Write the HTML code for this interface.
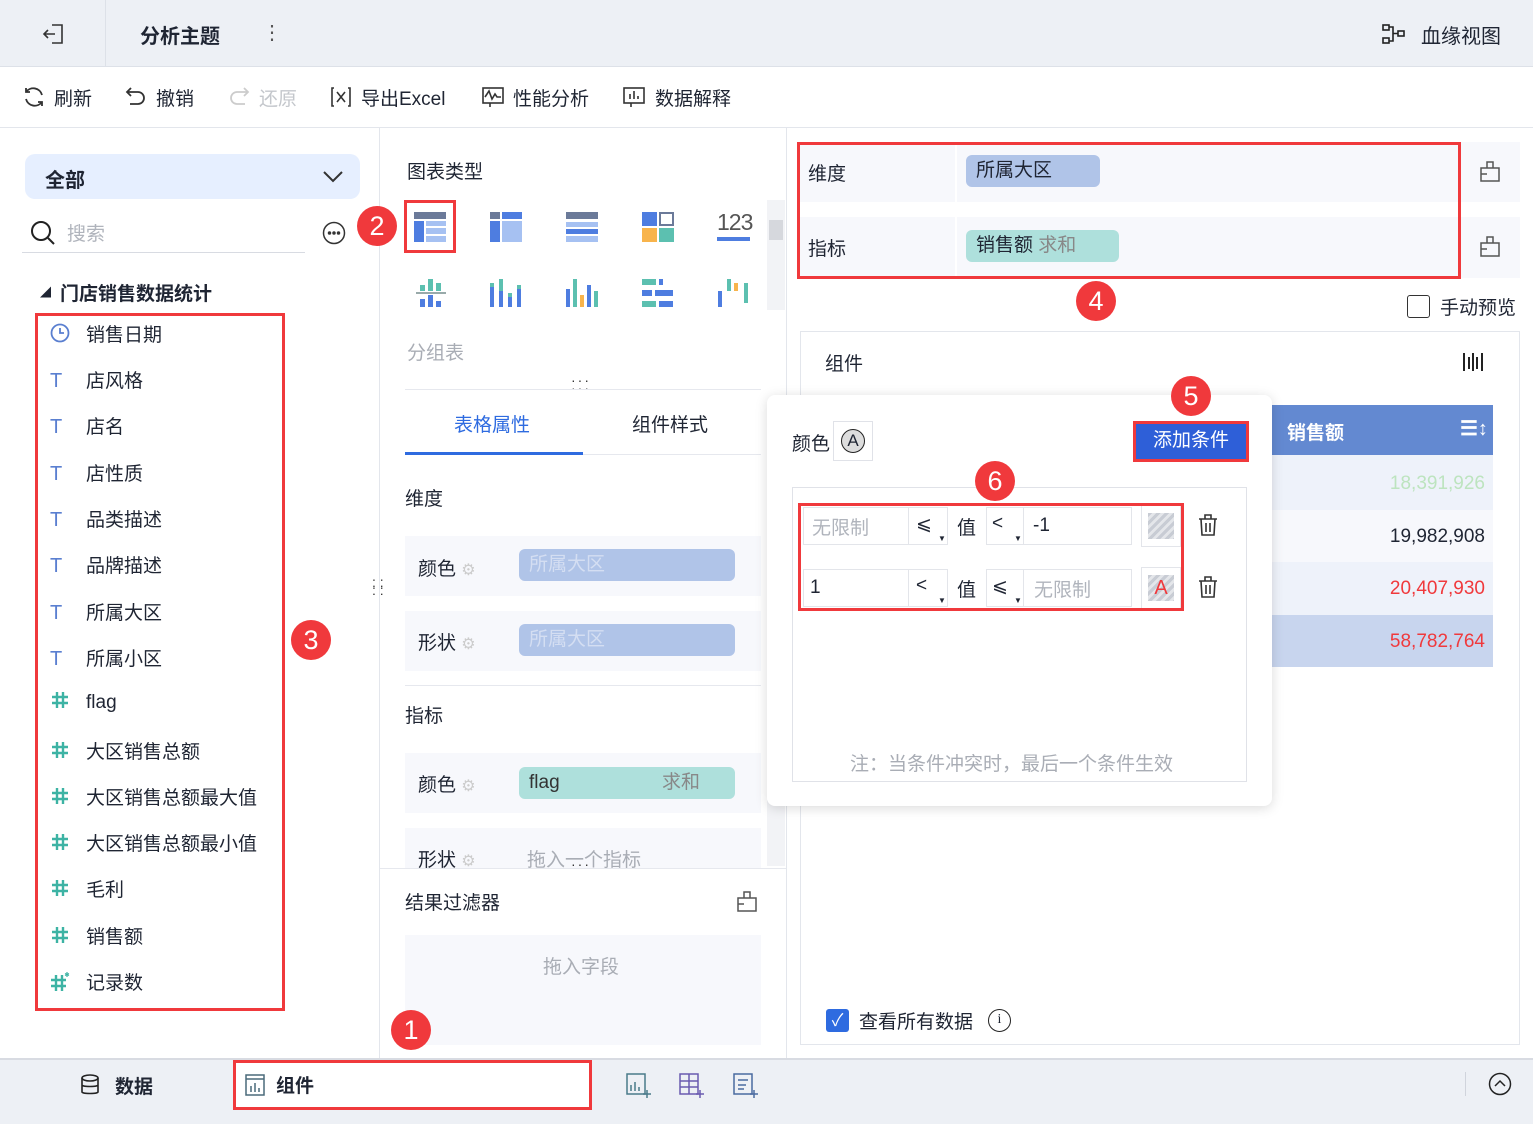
<!DOCTYPE html>
<html><head><meta charset="utf-8">
<style>
*{margin:0;padding:0;box-sizing:border-box}
body{width:1533px;height:1124px;position:relative;overflow:hidden;background:#fff;font-family:"Liberation Sans","Noto Sans CJK SC",sans-serif;color:#1f2533;font-size:19px}
.a{position:absolute;white-space:nowrap}
.badge{position:absolute;width:40px;height:40px;border-radius:50%;background:#f0393c;color:#fff;font-size:27px;text-align:center;line-height:40px}
.red{position:absolute;border:3px solid #f0393c}
.chip{position:absolute;border-radius:6px;padding-left:10px;font-size:19px;line-height:32px}
.row{position:absolute;background:#f7f8fc}
.li{position:absolute;left:50px;font-size:19px}
.li i{display:inline-block;width:36px;font-style:normal;color:#5a7fd0;font-size:20px}
.li svg{vertical-align:-2px;margin-right:16px}
</style></head><body>
<!-- header -->
<div class="a" style="left:0;top:0;width:1533px;height:67px;background:#edf0f5;border-bottom:1px solid #dde1e8"></div>
<div class="a" style="left:105px;top:0;width:1px;height:67px;background:#dde1e8"></div>
<svg class="a" style="left:42px;top:22px" width="24" height="24" viewBox="0 0 24 24" fill="none" stroke="#333" stroke-width="1.6"><path d="M10 3h10v18H10M2 12h11M6 8l-4 4 4 4"/></svg>
<div class="a" style="left:140px;top:20px;font-size:20px;font-weight:bold">分析主题</div>
<div class="a" style="left:262px;top:20px;font-size:20px;color:#555">⋮</div>
<svg class="a" style="left:1382px;top:24px" width="24" height="20" viewBox="0 0 24 20" fill="none" stroke="#222" stroke-width="1.6"><rect x="1" y="1" width="6" height="5"/><rect x="1" y="14" width="6" height="5"/><rect x="16" y="7" width="6" height="5"/><path d="M7 3h4v14H7M11 9.5h5"/></svg>
<div class="a" style="left:1421px;top:20px;font-size:20px">血缘视图</div>
<!-- toolbar -->
<div class="a" style="left:0;top:127px;width:1533px;height:1px;background:#e3e6ec"></div>
<svg class="a" style="left:22px;top:86px" width="24" height="22" viewBox="0 0 24 22" fill="none" stroke="#333" stroke-width="1.8"><path d="M20 9A9 9 0 0 0 4 6M4 2v4h4M4 13a9 9 0 0 0 16 3M20 20v-4h-4"/></svg>
<div class="a" style="left:54px;top:84px">刷新</div>
<svg class="a" style="left:125px;top:86px" width="22" height="22" viewBox="0 0 22 22" fill="none" stroke="#333" stroke-width="1.8"><path d="M6 2L2 6l4 4M2 6h11a6 6 0 0 1 0 12H5"/></svg>
<div class="a" style="left:156px;top:84px">撤销</div>
<svg class="a" style="left:228px;top:86px" width="22" height="22" viewBox="0 0 22 22" fill="none" stroke="#ccc" stroke-width="1.8"><path d="M16 2l4 4-4 4M20 6H9a6 6 0 0 0 0 12h8"/></svg>
<div class="a" style="left:259px;top:84px;color:#c4c7cc">还原</div>
<svg class="a" style="left:330px;top:86px" width="22" height="22" viewBox="0 0 22 22" fill="none" stroke="#333" stroke-width="1.6"><path d="M4 2H2v18h2M18 2h2v18h-2M7 6l8 10M15 6l-8 10"/></svg>
<div class="a" style="left:361px;top:84px">导出Excel</div>
<svg class="a" style="left:482px;top:86px" width="22" height="22" viewBox="0 0 22 22" fill="none" stroke="#333" stroke-width="1.6"><rect x="1" y="2" width="20" height="15"/><path d="M3 11l4-6 3 8 3-5 2 3h4M8 17v4"/></svg>
<div class="a" style="left:513px;top:84px">性能分析</div>
<svg class="a" style="left:623px;top:86px" width="22" height="22" viewBox="0 0 22 22" fill="none" stroke="#333" stroke-width="1.6"><rect x="1" y="2" width="20" height="15"/><path d="M7 13V8M11 13V5M15 13v-3M8 17v4"/></svg>
<div class="a" style="left:655px;top:84px">数据解释</div>
<!-- left panel -->
<div class="a" style="left:379px;top:128px;width:1px;height:930px;background:#e3e6ec"></div>
<div class="a" style="left:25px;top:154px;width:335px;height:45px;background:#e6efff;border-radius:10px"></div>
<div class="a" style="left:45px;top:164px;font-weight:bold;font-size:20px">全部</div>
<svg class="a" style="left:322px;top:170px" width="22" height="14" viewBox="0 0 22 14" fill="none" stroke="#333" stroke-width="2"><path d="M2 2l9 9 9-9"/></svg>
<svg class="a" style="left:30px;top:220px" width="26" height="26" viewBox="0 0 26 26" fill="none" stroke="#222" stroke-width="2"><circle cx="11" cy="11" r="9"/><path d="M18 18l6 6"/></svg>
<div class="a" style="left:67px;top:219px;color:#b0b4bc">搜索</div>
<div class="a" style="left:22px;top:252px;width:283px;height:1px;background:#d8dbe2"></div>
<svg class="a" style="left:322px;top:221px" width="24" height="24" viewBox="0 0 24 24" fill="none" stroke="#333" stroke-width="1.5"><circle cx="12" cy="12" r="10.5"/><circle cx="7.5" cy="12" r="1" fill="#333"/><circle cx="12" cy="12" r="1" fill="#333"/><circle cx="16.5" cy="12" r="1" fill="#333"/></svg>
<div class="a" style="left:40px;top:284px;font-size:11px">◢</div>
<div class="a" style="left:60px;top:279px;font-weight:bold;font-size:19px">门店销售数据统计</div>
<div class="li" style="top:320px"><svg width="20" height="20" viewBox="0 0 20 20" fill="none" stroke="#5a7fd0" stroke-width="1.8"><circle cx="10" cy="10" r="8.5"/><path d="M10 5v5h4"/></svg>销售日期</div>
<div class="li" style="top:366px"><i>T</i>店风格</div>
<div class="li" style="top:412px"><i>T</i>店名</div>
<div class="li" style="top:459px"><i>T</i>店性质</div>
<div class="li" style="top:505px"><i>T</i>品类描述</div>
<div class="li" style="top:551px"><i>T</i>品牌描述</div>
<div class="li" style="top:598px"><i>T</i>所属大区</div>
<div class="li" style="top:644px"><i>T</i>所属小区</div>
<div class="li" style="top:690px"><svg width="20" height="20" viewBox="0 0 20 20" stroke="#3db3a4" stroke-width="2.4"><path d="M7 2v16M13 2v16M2 7h16M2 13h16"/></svg>flag</div>
<div class="li" style="top:737px"><svg width="20" height="20" viewBox="0 0 20 20" stroke="#3db3a4" stroke-width="2.4"><path d="M7 2v16M13 2v16M2 7h16M2 13h16"/></svg>大区销售总额</div>
<div class="li" style="top:783px"><svg width="20" height="20" viewBox="0 0 20 20" stroke="#3db3a4" stroke-width="2.4"><path d="M7 2v16M13 2v16M2 7h16M2 13h16"/></svg>大区销售总额最大值</div>
<div class="li" style="top:829px"><svg width="20" height="20" viewBox="0 0 20 20" stroke="#3db3a4" stroke-width="2.4"><path d="M7 2v16M13 2v16M2 7h16M2 13h16"/></svg>大区销售总额最小值</div>
<div class="li" style="top:875px"><svg width="20" height="20" viewBox="0 0 20 20" stroke="#3db3a4" stroke-width="2.4"><path d="M7 2v16M13 2v16M2 7h16M2 13h16"/></svg>毛利</div>
<div class="li" style="top:922px"><svg width="20" height="20" viewBox="0 0 20 20" stroke="#3db3a4" stroke-width="2.4"><path d="M7 2v16M13 2v16M2 7h16M2 13h16"/></svg>销售额</div>
<div class="li" style="top:968px"><svg width="20" height="20" viewBox="0 0 20 20" stroke="#3db3a4" stroke-width="2.4"><path d="M6 4v16M12 4v16M1 9h15M1 15h15"/><path d="M17 1v5M15 2.5l4 2M15 4.5l4-2" stroke-width="1.2"/></svg>记录数</div>
<div class="red" style="left:35px;top:313px;width:250px;height:698px"></div>
<div class="badge" style="left:291px;top:620px">3</div>
<div class="a" style="left:372px;top:578px;font-size:14px;color:#333;line-height:8px">: :<br>: :</div>
<!-- middle -->
<div class="a" style="left:786px;top:128px;width:1px;height:930px;background:#e3e6ec"></div>
<div class="a" style="left:407px;top:157px">图表类型</div>
<div class="red" style="left:404px;top:200px;width:52px;height:53px"></div>
<div class="badge" style="left:357px;top:206px">2</div>
<svg class="a" style="left:414px;top:212px" width="32" height="30"><rect width="32" height="7" fill="#6b7a99"/><rect y="9" width="10" height="21" fill="#4e7de0"/><rect x="12" y="9" width="20" height="5" fill="#a6c1f2"/><rect x="12" y="16" width="20" height="6" fill="#a6c1f2"/><rect x="12" y="24" width="20" height="6" fill="#a6c1f2"/></svg>
<svg class="a" style="left:490px;top:212px" width="32" height="30"><rect width="10" height="7" fill="#6b7a99"/><rect x="12" width="20" height="7" fill="#4e7de0"/><rect y="9" width="10" height="21" fill="#4e7de0"/><rect x="12" y="9" width="20" height="21" fill="#a6c1f2"/></svg>
<svg class="a" style="left:566px;top:212px" width="32" height="30"><rect width="32" height="7" fill="#6b7a99"/><rect y="10" width="32" height="5" fill="#a6c1f2"/><rect y="17" width="32" height="5" fill="#4e7de0"/><rect y="24" width="32" height="6" fill="#a6c1f2"/></svg>
<svg class="a" style="left:642px;top:212px" width="32" height="30"><rect width="15" height="14" fill="#4e7de0"/><rect x="18" y="1" width="13" height="12" fill="none" stroke="#6b7a99" stroke-width="2"/><rect y="16" width="15" height="14" fill="#f8b44c"/><rect x="17" y="16" width="15" height="14" fill="#5cc0b0"/></svg>
<div class="a" style="left:717px;top:209px;font-size:23px;color:#555;letter-spacing:-1px">123</div>
<div class="a" style="left:717px;top:237px;width:33px;height:4px;background:#4e7de0"></div>
<svg class="a" style="left:416px;top:279px" width="30" height="28"><rect x="4" y="6" width="5" height="6" fill="#5cc0b0"/><rect x="12" y="0" width="5" height="12" fill="#5cc0b0"/><rect x="20" y="4" width="5" height="8" fill="#5cc0b0"/><rect y="13" width="30" height="2" fill="#9aa"/><rect x="4" y="20" width="5" height="8" fill="#4e7de0"/><rect x="12" y="16" width="5" height="12" fill="#4e7de0"/><rect x="20" y="22" width="5" height="6" fill="#4e7de0"/></svg>
<svg class="a" style="left:490px;top:279px" width="32" height="28"><rect x="0" y="8" width="4" height="20" fill="#4e7de0"/><rect x="0" y="4" width="4" height="4" fill="#5cc0b0"/><rect x="9" y="12" width="4" height="16" fill="#4e7de0"/><rect x="9" y="0" width="4" height="12" fill="#5cc0b0"/><rect x="18" y="18" width="4" height="10" fill="#4e7de0"/><rect x="18" y="14" width="4" height="4" fill="#5cc0b0"/><rect x="27" y="10" width="4" height="18" fill="#4e7de0"/><rect x="27" y="6" width="4" height="4" fill="#5cc0b0"/></svg>
<svg class="a" style="left:566px;top:279px" width="32" height="28"><rect x="0" y="10" width="4" height="18" fill="#4e7de0"/><rect x="7" y="0" width="4" height="28" fill="#5cc0b0"/><rect x="14" y="16" width="4" height="12" fill="#f8b44c"/><rect x="21" y="6" width="4" height="22" fill="#4e7de0"/><rect x="28" y="12" width="4" height="16" fill="#5cc0b0"/></svg>
<svg class="a" style="left:642px;top:279px" width="32" height="28"><rect x="0" y="0" width="14" height="6" fill="#5cc0b0"/><rect x="17" y="0" width="4" height="6" fill="#4e7de0"/><rect x="0" y="11" width="10" height="6" fill="#4e7de0"/><rect x="13" y="11" width="18" height="6" fill="#4e7de0"/><rect x="0" y="22" width="14" height="6" fill="#5cc0b0"/><rect x="17" y="22" width="14" height="6" fill="#4e7de0"/></svg>
<svg class="a" style="left:718px;top:279px" width="32" height="28"><rect x="0" y="12" width="4" height="16" fill="#4e7de0"/><rect x="9" y="0" width="4" height="12" fill="#5cc0b0"/><rect x="16" y="4" width="4" height="8" fill="#f8b44c"/><rect x="26" y="4" width="4" height="20" fill="#5cc0b0"/></svg>
<div class="a" style="left:767px;top:200px;width:18px;height:110px;background:#f2f3f6"></div>
<div class="a" style="left:769px;top:220px;width:14px;height:20px;background:#d6d8dd"></div>
<div class="a" style="left:407px;top:338px;color:#a9adb5">分组表</div>
<div class="a" style="left:571px;top:376px;font-size:14px;color:#333;letter-spacing:2px;line-height:8px">···<br>···</div>
<div class="a" style="left:405px;top:389px;width:356px;height:1px;background:#e6e8ee"></div>
<div class="a" style="left:454px;top:410px;color:#2e6be0">表格属性</div>
<div class="a" style="left:632px;top:410px">组件样式</div>
<div class="a" style="left:405px;top:454px;width:356px;height:1px;background:#e6e8ee"></div>
<div class="a" style="left:405px;top:452px;width:178px;height:3px;background:#2e6be0"></div>
<div class="a" style="left:405px;top:484px">维度</div>
<div class="row" style="left:405px;top:536px;width:356px;height:60px"></div>
<div class="a" style="left:418px;top:554px">颜色 <span style="color:#ccc;font-size:16px">⚙</span></div>
<div class="chip" style="left:519px;top:549px;width:216px;background:#b0c4e8;color:#d4def2">所属大区</div>
<div class="row" style="left:405px;top:611px;width:356px;height:60px"></div>
<div class="a" style="left:418px;top:628px">形状 <span style="color:#ccc;font-size:16px">⚙</span></div>
<div class="chip" style="left:519px;top:624px;width:216px;background:#b0c4e8;color:#d4def2">所属大区</div>
<div class="a" style="left:405px;top:685px;width:356px;height:1px;background:#e6e8ee"></div>
<div class="a" style="left:405px;top:701px">指标</div>
<div class="row" style="left:405px;top:753px;width:356px;height:60px"></div>
<div class="a" style="left:418px;top:770px">颜色 <span style="color:#ccc;font-size:16px">⚙</span></div>
<div class="chip" style="left:519px;top:767px;width:216px;background:#aee0dc;color:#333">flag<span style="position:absolute;left:143px;color:#888">求和</span></div>
<div class="row" style="left:405px;top:828px;width:356px;height:40px"></div>
<div class="a" style="left:418px;top:845px">形状 <span style="color:#ccc;font-size:16px">⚙</span></div>
<div class="a" style="left:527px;top:845px;color:#a9adb5">拖入一个指标</div>
<div class="a" style="left:767px;top:800px;width:18px;height:66px;background:#f2f3f6"></div>
<div class="a" style="left:380px;top:868px;width:406px;height:1px;background:#e6e8ee"></div>
<div class="a" style="left:571px;top:860px;font-size:14px;color:#333;letter-spacing:2px;line-height:8px">···</div>
<div class="a" style="left:405px;top:888px">结果过滤器</div>
<svg class="a" style="left:737px;top:890px" width="20" height="22" viewBox="0 0 20 22" fill="none" stroke="#555" stroke-width="1.5"><path d="M1 8h18v13H1zM7 8V2h6v6M1 14h6"/></svg>
<div class="a" style="left:405px;top:935px;width:356px;height:110px;background:#f7f8fc"></div>
<div class="a" style="left:543px;top:952px;color:#a9adb5">拖入字段</div>
<!-- right -->
<div class="row" style="left:797px;top:142px;width:723px;height:60px"></div>
<div class="a" style="left:955px;top:142px;width:2px;height:60px;background:#fff"></div>
<div class="a" style="left:808px;top:159px">维度</div>
<div class="chip" style="left:966px;top:155px;width:134px;background:#b0c4e8;color:#1f2533">所属大区</div>
<div class="row" style="left:797px;top:217px;width:723px;height:61px"></div>
<div class="a" style="left:955px;top:217px;width:2px;height:61px;background:#fff"></div>
<div class="a" style="left:808px;top:234px">指标</div>
<div class="chip" style="left:966px;top:230px;width:153px;background:#aee0dc;color:#1f2533">销售额 <span style="color:#888">求和</span></div>
<div class="a" style="left:1458px;top:142px;width:3px;height:136px;background:#fff"></div>
<svg class="a" style="left:1480px;top:160px" width="20" height="22" viewBox="0 0 20 22" fill="none" stroke="#555" stroke-width="1.5"><path d="M1 8h18v13H1zM7 8V2h6v6M1 14h6"/></svg>
<svg class="a" style="left:1480px;top:235px" width="20" height="22" viewBox="0 0 20 22" fill="none" stroke="#555" stroke-width="1.5"><path d="M1 8h18v13H1zM7 8V2h6v6M1 14h6"/></svg>
<div class="red" style="left:797px;top:142px;width:664px;height:137px"></div>
<div class="badge" style="left:1076px;top:281px">4</div>
<div class="a" style="left:1407px;top:295px;width:23px;height:23px;border:1.5px solid #333;border-radius:3px"></div>
<div class="a" style="left:1440px;top:293px">手动预览</div>
<div class="a" style="left:800px;top:331px;width:720px;height:714px;border:1px solid #e3e6ec"></div>
<div class="a" style="left:825px;top:349px">组件</div>
<svg class="a" style="left:1462px;top:351px" width="22" height="22" viewBox="0 0 22 22" stroke="#222" stroke-width="2"><path d="M2 2v18M7 6v12M11 2v18M15 6v12M20 2v18"/></svg>
<div class="a" style="left:1272px;top:405px;width:221px;height:50px;background:#6389d1"></div>
<div class="a" style="left:1287px;top:418px;color:#fff;font-weight:bold">销售额</div>
<div class="a" style="left:1460px;top:416px;color:#fff;font-size:20px;font-weight:bold">☰↕</div>
<div class="a" style="left:1272px;top:455px;width:221px;height:55px;background:#eef2fa"></div>
<div class="a" style="left:1272px;top:510px;width:221px;height:52px;background:#f7f8fc"></div>
<div class="a" style="left:1272px;top:562px;width:221px;height:53px;background:#eef2fa"></div>
<div class="a" style="left:1272px;top:615px;width:221px;height:52px;background:#c8d5ee"></div>
<div class="a" style="right:48px;top:473px;color:#bde4bf">18,391,926</div>
<div class="a" style="right:48px;top:526px;color:#1f2533">19,982,908</div>
<div class="a" style="right:48px;top:578px;color:#f0393c">20,407,930</div>
<div class="a" style="right:48px;top:631px;color:#f0393c">58,782,764</div>
<div class="a" style="left:826px;top:1009px;width:23px;height:23px;background:#2e6be0;border-radius:3px;color:#fff;font-size:17px;text-align:center;line-height:23px">✓</div>
<div class="a" style="left:859px;top:1007px">查看所有数据</div>
<div class="a" style="left:988px;top:1009px;width:23px;height:23px;border:1.5px solid #222;border-radius:50%;font-size:14px;text-align:center;line-height:20px;font-family:'Liberation Serif'">i</div>
<!-- popover -->
<div class="a" style="left:767px;top:395px;width:505px;height:411px;background:#fff;border-radius:8px;box-shadow:0 2px 12px rgba(0,0,0,.15)"></div>
<div class="a" style="left:792px;top:429px">颜色</div>
<div class="a" style="left:833px;top:421px;width:40px;height:40px;border:1px solid #e0e2e8"></div>
<div class="a" style="left:841px;top:429px;width:24px;height:24px;border:1.5px solid #222;border-radius:50%;font-size:17px;text-align:center;line-height:22px;background:#ddd">A</div>
<div class="a" style="left:1133px;top:421px;width:116px;height:41px;background:#2e5fd8;border:3px solid #f0393c;color:#fff;text-align:center;line-height:34px">添加条件</div>
<div class="badge" style="left:1171px;top:376px">5</div>
<div class="a" style="left:792px;top:487px;width:455px;height:295px;border:1px solid #e0e2e8"></div>
<div class="badge" style="left:975px;top:461px">6</div>
<!-- cond row1 -->
<div class="a" style="left:803px;top:507px;width:145px;height:38px;border:1px solid #e3e5ea"></div>
<div class="a" style="left:908px;top:507px;width:1px;height:38px;background:#e3e5ea"></div>
<div class="a" style="left:812px;top:513px;color:#b0b4bc">无限制</div>
<div class="a" style="left:916px;top:513px">⩽</div><div class="a" style="left:938px;top:534px;font-size:8px">▼</div>
<div class="a" style="left:957px;top:513px">值</div>
<div class="a" style="left:986px;top:507px;width:146px;height:38px;border:1px solid #e3e5ea"></div>
<div class="a" style="left:1023px;top:507px;width:1px;height:38px;background:#e3e5ea"></div>
<div class="a" style="left:992px;top:513px">&lt;</div><div class="a" style="left:1014px;top:534px;font-size:8px">▼</div>
<div class="a" style="left:1033px;top:515px">-1</div>
<div class="a" style="left:1141px;top:505px;width:40px;height:42px;border:1px solid #e3e5ea"></div>
<div class="a" style="left:1148px;top:513px;width:26px;height:26px;background:repeating-linear-gradient(135deg,#c8ccd4 0 3px,#e4e6ea 3px 6px)"></div>
<svg class="a" style="left:1198px;top:514px" width="20" height="22" viewBox="0 0 20 22" fill="none" stroke="#333" stroke-width="1.6"><path d="M1 5h18M7 5V1h6v4M3 5l1 16h12l1-16M8 9v9M12 9v9"/></svg>
<!-- cond row2 -->
<div class="a" style="left:803px;top:569px;width:145px;height:38px;border:1px solid #e3e5ea"></div>
<div class="a" style="left:908px;top:569px;width:1px;height:38px;background:#e3e5ea"></div>
<div class="a" style="left:810px;top:577px">1</div>
<div class="a" style="left:916px;top:575px">&lt;</div><div class="a" style="left:938px;top:596px;font-size:8px">▼</div>
<div class="a" style="left:957px;top:575px">值</div>
<div class="a" style="left:986px;top:569px;width:146px;height:38px;border:1px solid #e3e5ea"></div>
<div class="a" style="left:1023px;top:569px;width:1px;height:38px;background:#e3e5ea"></div>
<div class="a" style="left:992px;top:575px">⩽</div><div class="a" style="left:1014px;top:596px;font-size:8px">▼</div>
<div class="a" style="left:1034px;top:575px;color:#b0b4bc">无限制</div>
<div class="a" style="left:1141px;top:567px;width:40px;height:42px;border:1px solid #e3e5ea"></div>
<div class="a" style="left:1148px;top:575px;width:26px;height:26px;background:repeating-linear-gradient(135deg,#c8ccd4 0 3px,#e4e6ea 3px 6px);color:#f0393c;text-align:center;line-height:26px;font-size:20px">A</div>
<svg class="a" style="left:1198px;top:576px" width="20" height="22" viewBox="0 0 20 22" fill="none" stroke="#333" stroke-width="1.6"><path d="M1 5h18M7 5V1h6v4M3 5l1 16h12l1-16M8 9v9M12 9v9"/></svg>
<div class="red" style="left:798px;top:503px;width:386px;height:108px"></div>
<div class="a" style="left:850px;top:749px;color:#a9adb5">注：当条件冲突时，最后一个条件生效</div>
<!-- bottom -->
<div class="a" style="left:0;top:1058px;width:1533px;height:66px;background:#edf0f5;border-top:2px solid #d8dbe2"></div>
<svg class="a" style="left:80px;top:1074px" width="20" height="22" viewBox="0 0 20 22" fill="none" stroke="#222" stroke-width="1.6"><ellipse cx="10" cy="4" rx="8" ry="3"/><path d="M2 4v14c0 2 16 2 16 0V4M2 11c0 2 16 2 16 0"/></svg>
<div class="a" style="left:115px;top:1072px;font-weight:bold">数据</div>
<div class="a" style="left:233px;top:1060px;width:359px;height:50px;background:#fff;border:3px solid #f0393c"></div>
<svg class="a" style="left:245px;top:1074px" width="20" height="22" viewBox="0 0 20 22" fill="none" stroke="#4a6a7a" stroke-width="1.5"><rect x="1" y="1" width="18" height="20"/><path d="M1 5h18M6 18v-6M10 18V9M14 18v-4"/></svg>
<div class="a" style="left:276px;top:1071px;font-weight:bold">组件</div>
<div class="badge" style="left:391px;top:1010px">1</div>
<svg class="a" style="left:626px;top:1073px" width="26" height="26" viewBox="0 0 26 26" fill="none" stroke="#4a7a8a" stroke-width="1.5"><rect x="1" y="1" width="18" height="20"/><path d="M5 18v-6M9 18V9M13 18v-4M21 17v8M17 21h8"/></svg>
<svg class="a" style="left:679px;top:1073px" width="26" height="26" viewBox="0 0 26 26" fill="none" stroke="#6a5ab0" stroke-width="1.5"><rect x="1" y="1" width="18" height="20"/><path d="M1 8h18M1 14h18M10 1v20M21 17v8M17 21h8"/></svg>
<svg class="a" style="left:733px;top:1073px" width="26" height="26" viewBox="0 0 26 26" fill="none" stroke="#4a6aa0" stroke-width="1.5"><rect x="1" y="1" width="18" height="20"/><path d="M5 7h10M5 12h8M5 16h6M21 17v8M17 21h8"/></svg>
<div class="a" style="left:1465px;top:1072px;width:1px;height:24px;background:#d0d4dc"></div>
<svg class="a" style="left:1488px;top:1072px" width="24" height="24" viewBox="0 0 24 24" fill="none" stroke="#222" stroke-width="1.5"><circle cx="12" cy="12" r="10.5"/><path d="M7 14l5-5 5 5"/></svg>
</body></html>
